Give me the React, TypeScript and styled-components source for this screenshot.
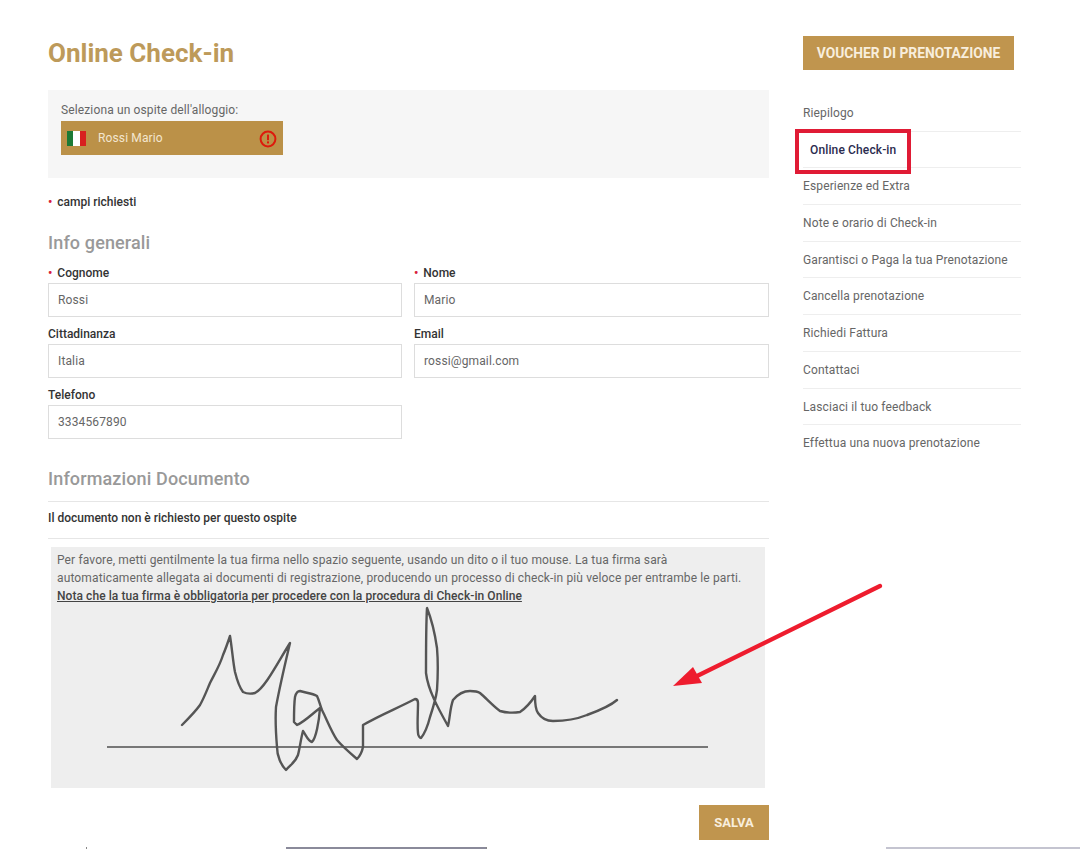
import React from "react";
import styled, { createGlobalStyle } from "styled-components";

const gold = "#bb9148";

const GlobalStyle = createGlobalStyle`
    html, body {
        margin: 0;
        padding: 0;
        background: #fff;
        font-family: Roboto, "Liberation Sans", sans-serif;
        font-size: 12px;
        letter-spacing: 0.13px;
        color: #666;
        overflow: hidden;
    }
    * { box-sizing: border-box; }
`;
const Page = styled.div`
    position: relative;
    width: 1080px;
    height: 849px;
    overflow: hidden;
    display: flex;
    flex-direction: column;
`;
const Columns = styled.div`
    flex: 1;
    display: flex;
    gap: 34px;
    padding-left: 48px;
`;
const Main = styled.main`
    width: 721px;
    display: flex;
    flex-direction: column;
`;
const Title = styled.h1`
    margin: 0;
    padding-top: 38px;
    height: 90px;
    font-size: 26px;
    line-height: 30px;
    font-weight: 700;
    letter-spacing: 0;
    color: #bd9a5a;
`;
const GuestPanel = styled.section`
    height: 88px;
    padding: 12px 13px 0;
    background: #f6f6f6;
`;
const GuestLabel = styled.div`
    height: 19px;
    line-height: 17px;
`;
const GuestButton = styled.div`
    width: 222px;
    height: 34px;
    padding: 0 6px;
    display: flex;
    align-items: center;
    background: ${gold};
    color: #f3e6cf;
`;
const GuestName = styled.span`
    margin-left: 12px;
    flex: 1;
`;
const Flag = styled.span`
    width: 19px;
    height: 15px;
    background: linear-gradient(90deg, #1c7a35 0 33%, #fff 33% 67%, #d8201f 67%);
`;
const Required = styled.div`
    padding-top: 16px;
    height: 53px;
    line-height: 16px;
    color: #333;
    font-weight: 500;
    letter-spacing: 0;
`;
const Dot = styled.span`
    color: #d8203a;
    font-weight: 700;
    margin-right: 5px;
`;
const SectionTitle = styled.h2`
    margin: 0;
    height: 34px;
    font-size: 18px;
    line-height: 24px;
    font-weight: 500;
    color: #999;
`;
const FieldGrid = styled.div`
    display: grid;
    grid-template-columns: 354px 355px;
    column-gap: 12px;
    row-gap: 9px;
`;
const Field = styled.div`
    display: flex;
    flex-direction: column;
`;
const Label = styled.label`
    height: 18px;
    line-height: 16px;
    font-weight: 500;
    letter-spacing: 0;
    color: #333;
`;
const Input = styled.div`
    height: 34px;
    padding-left: 9px;
    display: flex;
    align-items: center;
    background: #fff;
    border: 1px solid #ddd;
    color: #666;
`;
const DocTitle = styled(SectionTitle)`
    margin-top: 26px;
    height: 24px;
    line-height: 27px;
`;
const DocNote = styled.div`
    margin-top: 12px;
    height: 38px;
    line-height: 32px;
    border-top: 1px solid #e6e6e6;
    border-bottom: 1px solid #e6e6e6;
    font-weight: 500;
    letter-spacing: 0;
    color: #333;
`;
const SignaturePanel = styled.section`
    margin: 8px 4px 0 3px;
    height: 241px;
    padding-top: 4px;
    background: #eee;
`;
const SignatureText = styled.p`
    margin: 0;
    padding: 0 6px;
    height: 53px;
    line-height: 18px;
    color: #666;
`;
const SignatureLink = styled.span`
    display: block;
    color: #444;
    font-weight: 500;
    letter-spacing: 0.07px;
    text-decoration: underline;
`;
const SaveRow = styled.div`
    margin-top: 17px;
    display: flex;
    justify-content: flex-end;
`;
const GoldButton = styled.button`
    height: 35px;
    width: 70px;
    border: 0;
    padding: 0;
    background: #c0954e;
    color: #f8eedd;
    font: 700 13px Roboto, "Liberation Sans", sans-serif;
`;
const VoucherButton = styled(GoldButton)`
    display: block;
    width: 211px;
    height: 34px;
    font-size: 13.8px;
`;
const Sidebar = styled.aside`
    width: 218px;
    padding-top: 36px;
`;
const NavList = styled.ul`
    margin: 25px 0 0;
    padding: 0;
    list-style: none;
`;
const NavItem = styled.li<{ $active?: boolean }>`
    position: relative;
    height: 36.7px;
    padding-left: ${(p) => (p.$active ? 7 : 0)}px;
    line-height: 36px;
    border-bottom: 1px solid #eee;
    color: ${(p) => (p.$active ? "#2b2b4f" : "#666")};
    font-weight: ${(p) => (p.$active ? 500 : 400)};
    &:last-child { border-bottom: 0; }
`;
const Highlight = styled.span`
    position: absolute;
    left: -8px;
    top: -3px;
    width: 116px;
    height: 45px;
    border: 4px solid #e01b35;
`;
const Arrow = styled.svg`
    position: absolute;
    left: 660px;
    top: 575px;
`;
const BottomEdge = styled.div`
    height: 2px;
    display: grid;
    grid-template-columns: 86px 200px 200px 200px 200px 194px;
`;
const EdgeCell = styled.div<{ $kind?: "tick" | "dark" | "light" }>`
    ${(p) => p.$kind === "tick" && "border-left: 1px solid #888;"}
    ${(p) => p.$kind === "dark" && "background: #8a8a9a;"}
    ${(p) => p.$kind === "light" && "background: #c4c4d0;"}
`;

const AlertIcon = () => (
    <svg width="18" height="18" viewBox="0 0 18 18" style={{ marginTop: 2 }}>
        <circle cx="9" cy="9" r="7.4" fill="none" stroke="#dd1a0c" strokeWidth="2" />
        <rect x="8" y="4.6" width="2" height="5.6" fill="#dd1a0c" />
        <rect x="8" y="11.4" width="2" height="2" fill="#dd1a0c" />
    </svg>
);

const Signature = () => (
    <svg width="714" height="184" viewBox="51 604 714 184" style={{ display: "block" }}>
        <line x1="107" y1="747" x2="708" y2="747" stroke="#777" strokeWidth="2" />
        <path
            d="M182 725 C188 719 195 712 200 705 C204 698 207 690 210 683 C215 673 220 665 223 655 C226 648 228 642 230 636 C232 648 233 662 235 672 C237 680 240 688 243 692 C247 694 251 694 255 693 C265 688 278 662 290 643 C286 660 280 685 276 707 C275 722 276 735 277 747 C277 756 281 765 286 770 C290 765 295 763 298 755 C300 747 301 738 303 731 C306 735 308 741 312 742 C316 738 319 722 320 708 C312 714 304 722 297 725 L294 722 C294 714 294 704 295 697 C296 693 298 691 300 691 C306 693 312 693 317 696 C319 700 320 705 322 710 C327 720 331 731 337 740 C343 747 350 753 357 759 C360 756 362 752 363 747 C363 740 363 732 363 725 C380 715 398 708 415 699 C417 699 418 701 418 703 C418 713 417 725 418 733 C418 736 420 738 421 738 C425 733 428 725 430 717 C433 708 436 698 437 690 C438 675 438 660 437 648 C435 634 431 618 427 608 C426 625 426 655 426 673 C428 690 438 708 448 726 C450 718 450 708 453 700 C458 694 464 691 470 691 C474 691 477 691 480 693 C486 698 493 706 500 711 C507 713 514 713 520 712 C526 708 531 702 535 696 C535 702 535 709 538 713 C542 719 547 721 553 721 C565 721 577 719 587 715 C598 711 609 707 617 700"
            fill="none"
            stroke="#555"
            strokeWidth="2.4"
            strokeLinejoin="round"
            strokeLinecap="round"
        />
    </svg>
);

const App = () => {
    const nav = [
        "Riepilogo",
        "Online Check-in",
        "Esperienze ed Extra",
        "Note e orario di Check-in",
        "Garantisci o Paga la tua Prenotazione",
        "Cancella prenotazione",
        "Richiedi Fattura",
        "Contattaci",
        "Lasciaci il tuo feedback",
        "Effettua una nuova prenotazione",
    ];
    return (
        <Page>
            <GlobalStyle />
            <Columns>
                <Main>
                    <Title>Online Check-in</Title>
                    <GuestPanel>
                        <GuestLabel>Seleziona un ospite dell'alloggio:</GuestLabel>
                        <GuestButton>
                            <Flag />
                            <GuestName>Rossi Mario</GuestName>
                            <AlertIcon />
                        </GuestButton>
                    </GuestPanel>
                    <Required>
                        <Dot>•</Dot>campi richiesti
                    </Required>
                    <SectionTitle>Info generali</SectionTitle>
                    <FieldGrid>
                        <Field>
                            <Label><Dot>•</Dot>Cognome</Label>
                            <Input>Rossi</Input>
                        </Field>
                        <Field>
                            <Label><Dot>•</Dot>Nome</Label>
                            <Input>Mario</Input>
                        </Field>
                        <Field>
                            <Label>Cittadinanza</Label>
                            <Input>Italia</Input>
                        </Field>
                        <Field>
                            <Label>Email</Label>
                            <Input>rossi@gmail.com</Input>
                        </Field>
                        <Field>
                            <Label>Telefono</Label>
                            <Input>3334567890</Input>
                        </Field>
                    </FieldGrid>
                    <DocTitle>Informazioni Documento</DocTitle>
                    <DocNote>Il documento non è richiesto per questo ospite</DocNote>
                    <SignaturePanel>
                        <SignatureText>
                            Per favore, metti gentilmente la tua firma nello spazio seguente, usando un dito o il tuo mouse. La tua firma sarà
                            <br />
                            automaticamente allegata ai documenti di registrazione, producendo un processo di check-in più veloce per entrambe le parti.
                            <SignatureLink>Nota che la tua firma è obbligatoria per procedere con la procedura di Check-in Online</SignatureLink>
                        </SignatureText>
                        <Signature />
                    </SignaturePanel>
                    <SaveRow>
                        <GoldButton>SALVA</GoldButton>
                    </SaveRow>
                </Main>
                <Sidebar>
                    <VoucherButton>VOUCHER DI PRENOTAZIONE</VoucherButton>
                    <NavList>
                        {nav.map((item) => (
                            <NavItem key={item} $active={item === "Online Check-in"}>
                                {item}
                                {item === "Online Check-in" && <Highlight />}
                            </NavItem>
                        ))}
                    </NavList>
                </Sidebar>
            </Columns>
            <BottomEdge>
                <EdgeCell />
                <EdgeCell $kind="tick" />
                <EdgeCell $kind="dark" />
                <EdgeCell $kind="tick" />
                <EdgeCell />
                <EdgeCell $kind="light" />
            </BottomEdge>
            <Arrow width="230" height="120" viewBox="660 575 230 120">
                <line x1="880" y1="586" x2="695" y2="677" stroke="#ee1c2e" strokeWidth="4.2" strokeLinecap="round" />
                <polygon points="673,686 693,667 702,683" fill="#ee1c2e" />
            </Arrow>
        </Page>
    );
};

export default App;
